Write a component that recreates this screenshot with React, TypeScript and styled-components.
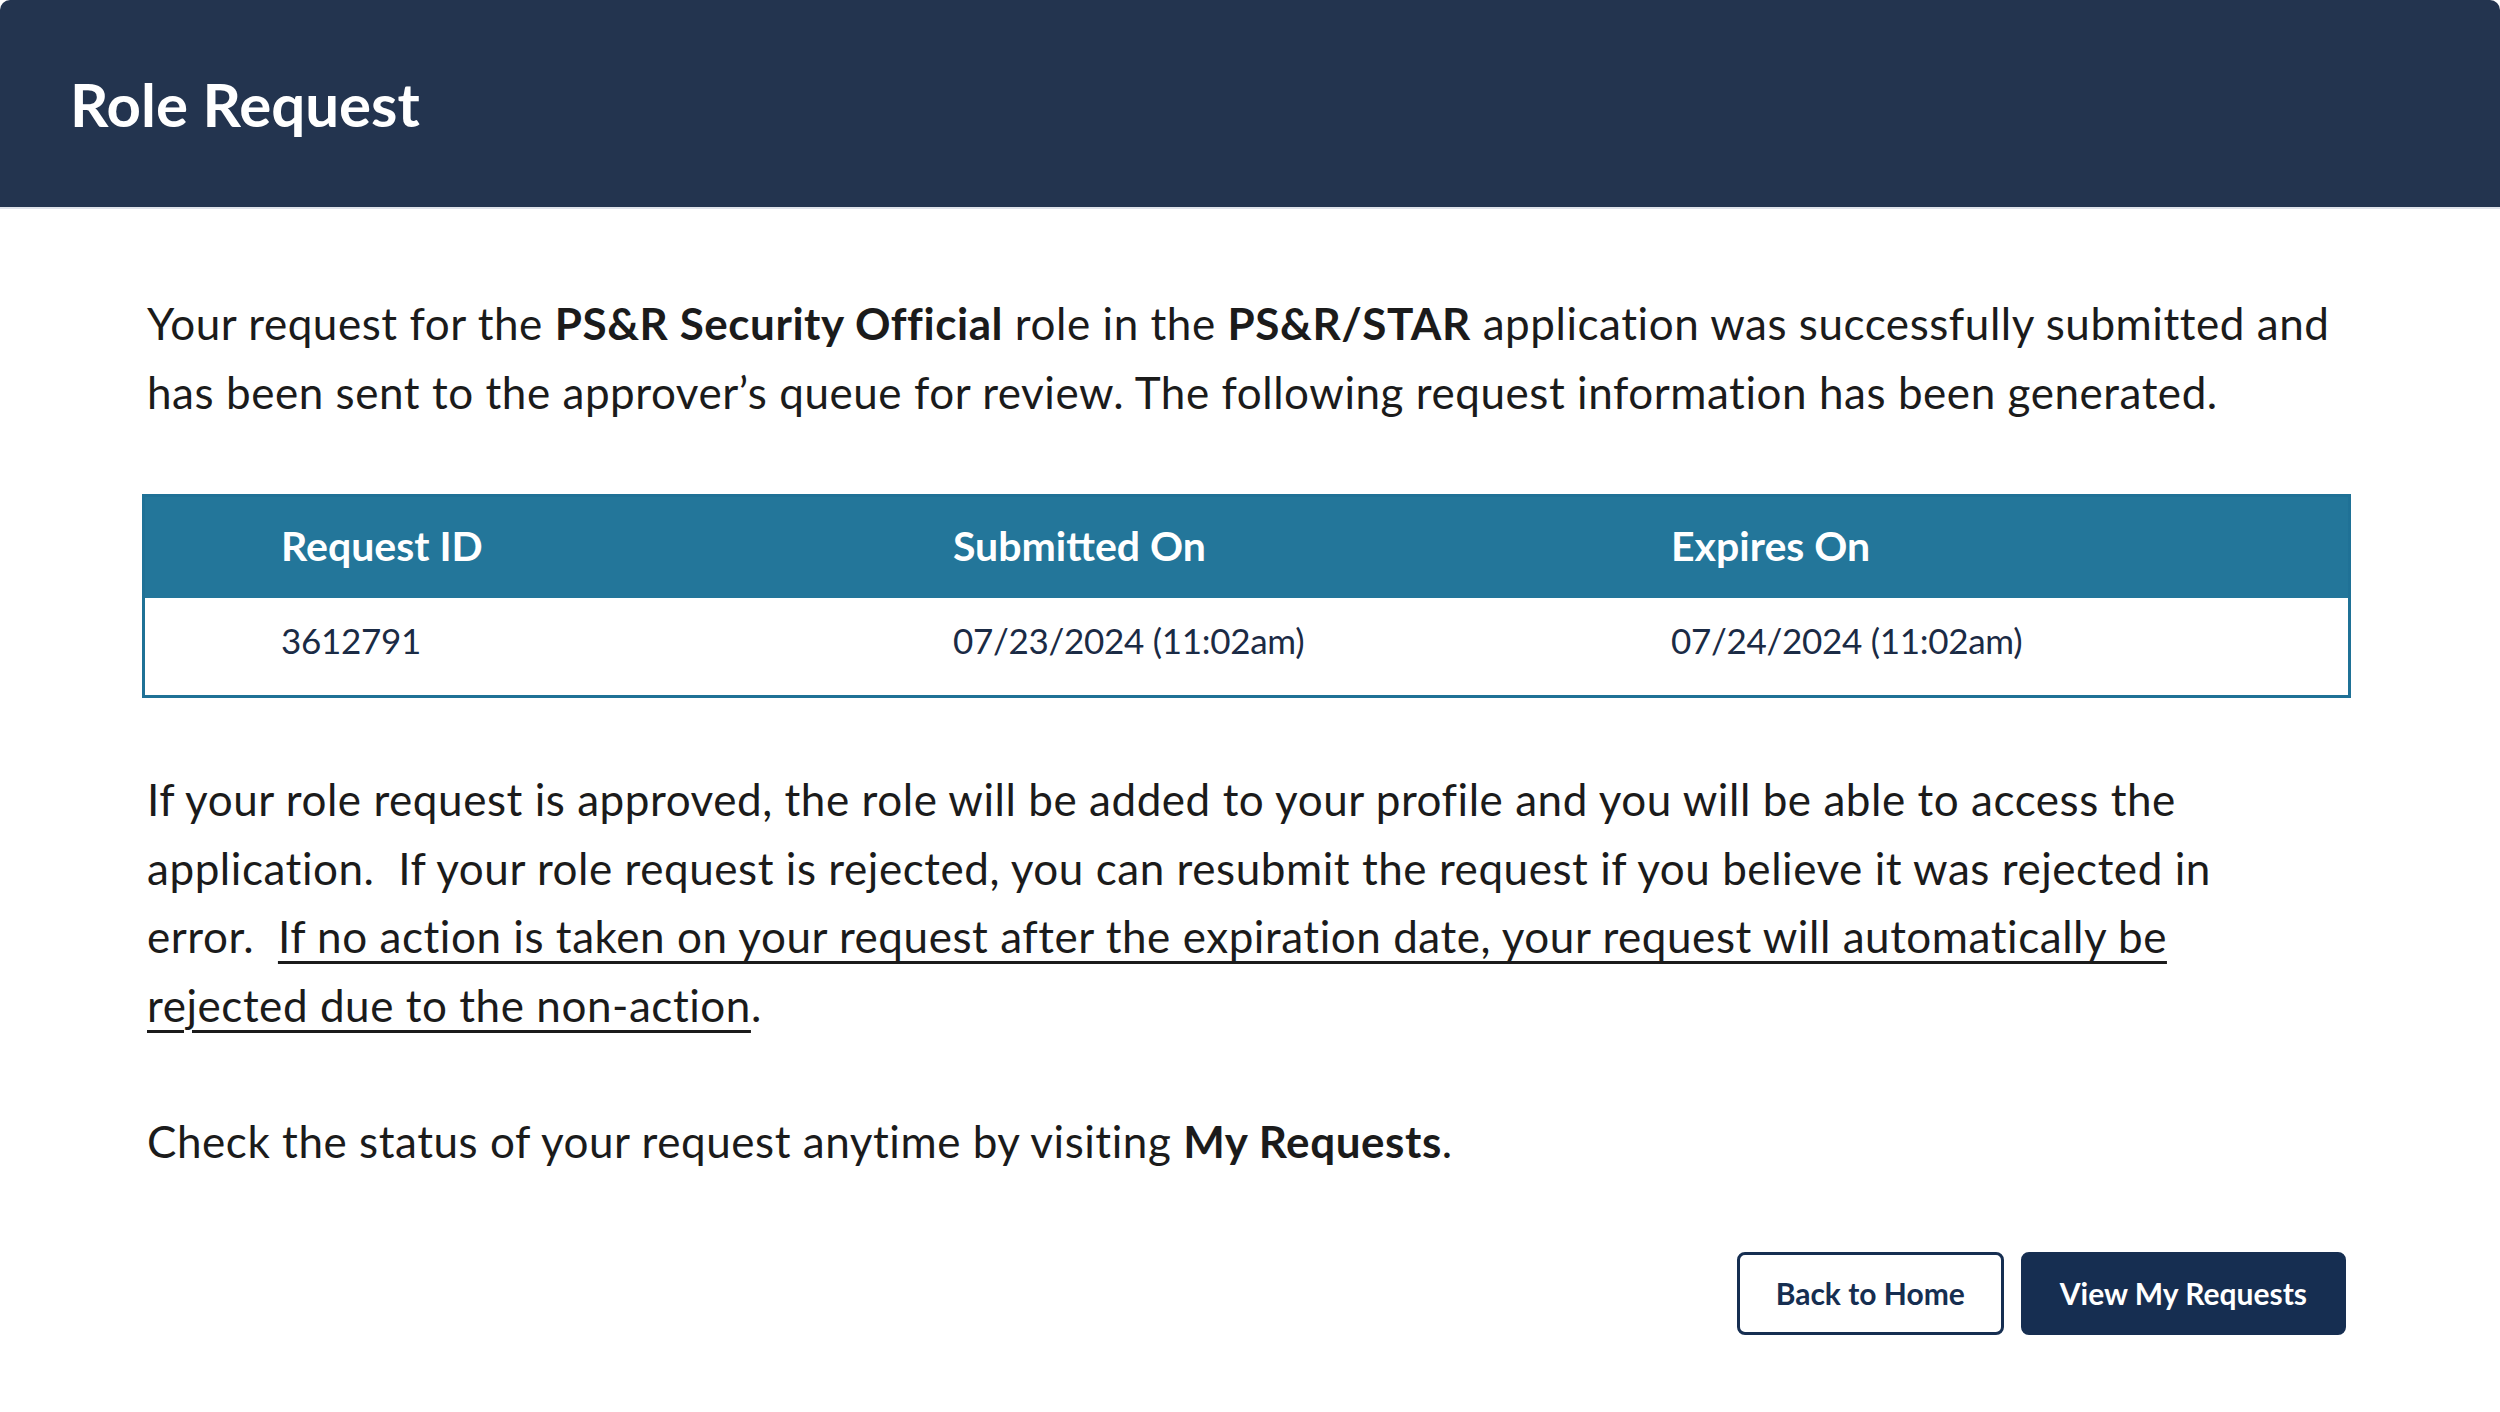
import React from "react";
import styled, { createGlobalStyle } from "styled-components";

const colors = {
  headerBg: "#23344f",
  ink: "#1b1b1b",
  tableBlue: "#23769a",
  tableBorder: "#1f7196",
  navy: "#162e51",
  cellText: "#1b2b45",
};

const GlobalStyle = createGlobalStyle`
  html, body {
    margin: 0;
    padding: 0;
    background: #ffffff;
  }

  body {
    font-family: Lato, "Open Sans", "Liberation Sans", sans-serif;
    color: ${colors.ink};
  }
`;

const Page = styled.div`
  width: 2500px;
  height: 1412px;
  display: flex;
  flex-direction: column;
  overflow: hidden;
`;

const Header = styled.header`
  height: 209px;
  box-sizing: border-box;
  display: flex;
  align-items: center;
  padding: 0 0 0 70px;
  background: ${colors.headerBg};
  border-radius: 10px 10px 0 0;
  border-bottom: 2px solid #dfe3ea;
`;

const Title = styled.h1`
  margin: 0;
  font-size: 60px;
  font-weight: 700;
  color: #ffffff;
`;

const Content = styled.main`
  display: flex;
  flex-direction: column;
  padding: 80px 120px 0 142px;
`;

const Paragraph = styled.p<{ $gap?: number }>`
  margin: 0 0 ${({ $gap }) => $gap ?? 0}px;
  padding-left: 5px;
  font-size: 44px;
  line-height: 68.5px;
  letter-spacing: 0.55px;
`;

const Strong = styled.strong`
  font-weight: 700;
`;

const Underlined = styled.span`
  text-decoration: underline;
  text-underline-offset: 8px;
  text-decoration-thickness: 3px;
`;

const Table = styled.div`
  display: grid;
  grid-template-columns: 808px 718px 1fr;
  width: 2209px;
  box-sizing: border-box;
  border: 3px solid ${colors.tableBorder};
  margin-bottom: 67px;
`;

const HeadCell = styled.div<{ $first?: boolean }>`
  height: 101px;
  display: flex;
  align-items: center;
  box-sizing: border-box;
  padding: 0 0 4px ${({ $first }) => ($first ? 136 : 0)}px;
  background: ${colors.tableBlue};
  color: #ffffff;
  font-size: 41px;
  font-weight: 700;
`;

const Cell = styled.div<{ $first?: boolean }>`
  height: 97px;
  display: flex;
  align-items: center;
  box-sizing: border-box;
  padding: 0 0 14px ${({ $first }) => ($first ? 136 : 0)}px;
  color: ${colors.cellText};
  font-size: 35px;
  letter-spacing: -0.3px;
`;

const Actions = styled.div`
  display: flex;
  justify-content: flex-end;
  gap: 17px;
  width: 2209px;
  box-sizing: border-box;
  padding-right: 5px;
  margin-top: 76px;
`;

const Button = styled.button<{ $primary?: boolean }>`
  height: 83px;
  box-sizing: border-box;
  padding: 0 36px;
  border-radius: 8px;
  border: 3px solid ${colors.navy};
  background: ${({ $primary }) => ($primary ? colors.navy : "#ffffff")};
  color: ${({ $primary }) => ($primary ? "#ffffff" : colors.navy)};
  font-family: Lato, "Open Sans", "Liberation Sans", sans-serif;
  font-size: 30px;
  font-weight: 700;
  cursor: pointer;
`;

const requestInfo = {
  id: "3612791",
  submitted: "07/23/2024 (11:02am)",
  expires: "07/24/2024 (11:02am)",
};

const App: React.FC = () => (
  <Page>
    <GlobalStyle />
    <Header>
      <Title>Role Request</Title>
    </Header>
    <Content>
      <Paragraph $gap={68}>
        Your request for the <Strong>PS&amp;R Security Official</Strong> role
        in the <Strong>PS&amp;R/STAR</Strong> application was successfully
        submitted and
        <br />
        has been sent to the approver’s queue for review. The following request
        information has been generated.
      </Paragraph>

      <Table>
        <HeadCell $first>Request ID</HeadCell>
        <HeadCell>Submitted On</HeadCell>
        <HeadCell>Expires On</HeadCell>
        <Cell $first>{requestInfo.id}</Cell>
        <Cell>{requestInfo.submitted}</Cell>
        <Cell>{requestInfo.expires}</Cell>
      </Table>

      <Paragraph $gap={68}>
        If your role request is approved, the role will be added to your
        profile and you will be able to access the
        <br />
        application.&nbsp; If your role request is rejected, you can resubmit
        the request if you believe it was rejected in
        <br />
        error.&nbsp;{" "}
        <Underlined>
          If no action is taken on your request after the expiration date,
          your request will automatically be
          <br />
          rejected due to the non-action
        </Underlined>
        .
      </Paragraph>

      <Paragraph>
        Check the status of your request anytime by visiting{" "}
        <Strong>My Requests</Strong>.
      </Paragraph>

      <Actions>
        <Button>Back to Home</Button>
        <Button $primary>View My Requests</Button>
      </Actions>
    </Content>
  </Page>
);

export default App;
